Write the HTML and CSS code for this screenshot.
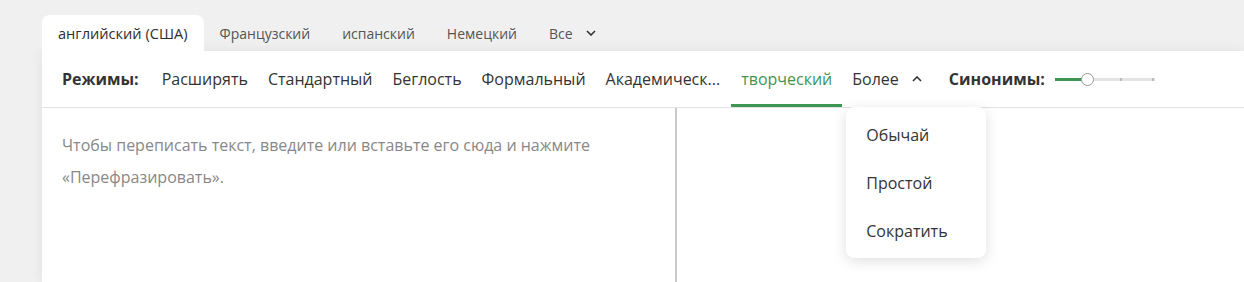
FILE: index.html
```html
<!DOCTYPE html>
<html lang="ru">
<head>
    <meta charset="UTF-8">
    <meta name="viewport" content="width=device-width, initial-scale=1.0">
    <title>Перефразировать</title>
    <link rel="stylesheet" href="styles.css">
</head>
<body>
<div class="app">
    <div class="lang-tabs">
        <div class="lang-tab active">английский (США)</div>
        <div class="lang-tab">Французский</div>
        <div class="lang-tab">испанский</div>
        <div class="lang-tab">Немецкий</div>
        <div class="lang-tab">Все
            <svg class="chev" width="10" height="6" viewBox="0 0 10 6"><path d="M1 1l4 4 4-4" fill="none" stroke="#333" stroke-width="1.6"/></svg>
        </div>
    </div>

    <div class="card">
        <div class="modes">
            <span class="modes-label">Режимы:</span>
            <div class="mode">Расширять</div>
            <div class="mode">Стандартный</div>
            <div class="mode">Беглость</div>
            <div class="mode">Формальный</div>
            <div class="mode">Академическ...</div>
            <div class="mode selected">творческий</div>
            <div class="mode more">Более
                <svg class="chev up" width="10" height="6" viewBox="0 0 10 6"><path d="M1 5l4-4 4 4" fill="none" stroke="#333" stroke-width="1.6"/></svg>
                <ul class="dropdown">
                    <li>Обычай</li>
                    <li>Простой</li>
                    <li>Сократить</li>
                </ul>
            </div>
            <span class="modes-label synonyms">Синонимы:</span>
            <div class="slider">
                <div class="track"></div>
                <div class="track-fill"></div>
                <div class="tick t1"></div>
                <div class="tick t2"></div>
                <div class="thumb"></div>
            </div>
        </div>

        <div class="editor">
            <div class="pane input">
                <p class="placeholder">Чтобы переписать текст, введите или вставьте его сюда и нажмите «Перефразировать».</p>
            </div>
            <div class="pane output"></div>
        </div>
    </div>
</div>
</body>
</html>
```

FILE: styles.css
```css
body {
    margin: 0;
    background-color: #f0f0f0;
    font-family: 'Open Sans', 'Noto Sans', sans-serif;
    color: #333;
    overflow: hidden;
    height: 282px;
}

.app {
    padding: 15px 0 0 42px;
}

.lang-tabs {
    display: flex;
    height: 36px;
}

.lang-tab {
    display: flex;
    align-items: center;
    padding: 0 16px;
    font-size: 14px;
    color: #555;
    border-radius: 8px 8px 0 0;
}

.lang-tab.active {
    background-color: #fff;
    color: #2e2e2e;
    font-size: 14.6px;
}

.lang-tab .chev {
    margin-left: 13px;
}

.card {
    background-color: #fff;
    box-shadow: 0 0 12px rgba(0, 0, 0, 0.07);
    height: 231px;
}

.modes {
    display: flex;
    align-items: center;
    height: 56px;
    padding-left: 20px;
    border-bottom: 1px solid #e2e2e2;
}

.modes-label {
    font-size: 16px;
    font-weight: 700;
    color: #333;
    margin-right: 13px;
}

.modes-label.synonyms {
    margin-left: 17px;
    margin-right: 10px;
}

.mode {
    position: relative;
    display: flex;
    align-items: center;
    height: 56px;
    box-sizing: border-box;
    padding: 3px 10px 0;
    font-size: 16px;
    color: #333;
    border-bottom: 3px solid transparent;
}

.mode.selected {
    color: #3f9552;
    border-bottom-color: #3f9552;
    margin-left: 1px;
}

.mode .chev {
    margin-left: 13px;
}

.dropdown {
    position: absolute;
    top: 56px;
    left: 4px;
    width: 140px;
    margin: 0;
    padding: 4px 0 3px;
    list-style: none;
    background-color: #fff;
    border-radius: 8px;
    box-shadow: 0 3px 14px rgba(0, 0, 0, 0.13);
    z-index: 2;
}

.dropdown li {
    height: 48px;
    line-height: 48px;
    padding-left: 20px;
    font-size: 16px;
    color: #333;
}

.slider {
    position: relative;
    width: 100px;
    height: 14px;
}

.track {
    position: absolute;
    left: 0;
    right: 0;
    top: 6px;
    height: 3px;
    background-color: #e4e4e4;
}

.track-fill {
    position: absolute;
    left: 0;
    width: 30px;
    top: 6px;
    height: 3px;
    background-color: #3f9552;
}

.tick {
    position: absolute;
    top: 6px;
    width: 2px;
    height: 3px;
    background-color: #bbb;
}

.tick.t1 { left: 65px; }
.tick.t2 { left: 97px; }

.thumb {
    position: absolute;
    left: 26px;
    top: 1px;
    width: 11px;
    height: 11px;
    border: 1px solid #999;
    border-radius: 50%;
    background-color: #fff;
}

.editor {
    display: flex;
    height: 174px;
}

.pane.input {
    width: 635px;
    border-right: 2px solid #c9c9c9;
    padding: 21px 20px 0;
    box-sizing: border-box;
}

.placeholder {
    margin: 0;
    font-size: 16px;
    line-height: 32px;
    color: #888;
}

.pane.output {
    flex: 1;
}
```
